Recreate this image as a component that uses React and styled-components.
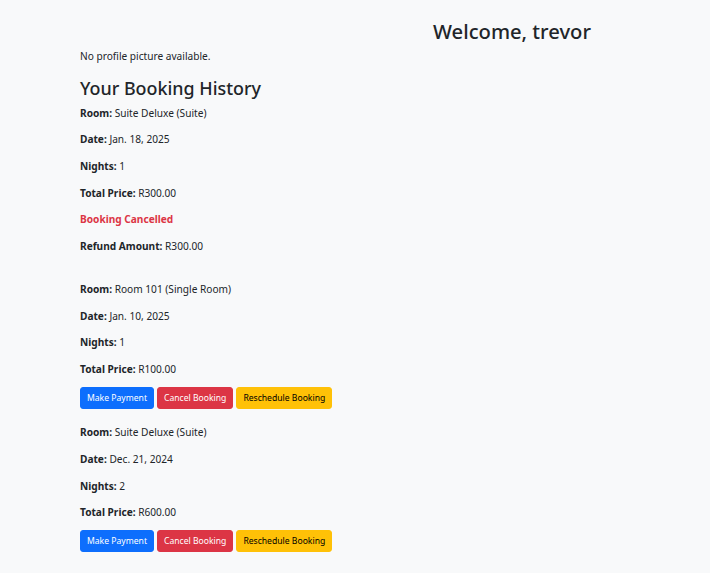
import React from 'react';
import styled, { createGlobalStyle } from 'styled-components';

const GlobalStyle = createGlobalStyle`
  html, body {
    margin: 0;
    padding: 0;
    background: #f8f9fa;
  }
  body {
    font-family: "Noto Sans", "Liberation Sans", sans-serif;
    font-size: 10.15px;
    line-height: 15.9px;
    color: #212529;
  }
`;

const Page = styled.div`
  min-height: 573px;
  padding: 19px 0 0 80px;
  box-sizing: border-box;
`;

const Welcome = styled.h1`
  margin: 0 0 5px;
  padding-left: 234px;
  text-align: center;
  font-size: 20.2px;
  font-weight: 500;
  line-height: 25px;
`;

const Text = styled.p`
  margin: 0 0 10.75px;
  color: ${({ $tone }) => ($tone === 'danger' ? '#dc3545' : '#212529')};
  font-weight: ${({ $tone }) => ($tone === 'danger' ? 700 : 400)};
`;

const Heading = styled.h2`
  margin: 0 0 6px;
  font-size: 17.9px;
  font-weight: 500;
  line-height: 24px;
`;

const Booking = styled.div`
  padding-bottom: 16.5px;
`;

const Actions = styled.div`
  display: flex;
  gap: 3px;
  margin-top: -2px;
`;

const colors = {
  primary: { bg: '#0d6efd', fg: '#fff' },
  danger: { bg: '#dc3545', fg: '#fff' },
  warning: { bg: '#ffc107', fg: '#000' },
};

const Button = styled.button`
  font-family: inherit;
  font-size: 8.6px;
  line-height: 14px;
  padding: 3px 6px;
  border: 1px solid ${({ $variant }) => colors[$variant].bg};
  border-radius: 3px;
  background: ${({ $variant }) => colors[$variant].bg};
  color: ${({ $variant }) => colors[$variant].fg};
  cursor: pointer;
`;

const bookings = [
  {
    room: 'Suite Deluxe (Suite)',
    date: 'Jan. 18, 2025',
    nights: 1,
    price: 'R300.00',
    cancelled: true,
    refund: 'R300.00',
  },
  { room: 'Room 101 (Single Room)', date: 'Jan. 10, 2025', nights: 1, price: 'R100.00' },
  { room: 'Suite Deluxe (Suite)', date: 'Dec. 21, 2024', nights: 2, price: 'R600.00' },
];

const Field = ({ label, children }) => (
  <Text>
    <strong>{label}:</strong> {children}
  </Text>
);

export default function App() {
  return (
    <>
      <GlobalStyle />
      <Page>
        <Welcome>Welcome, trevor</Welcome>
        <Text>No profile picture available.</Text>
        <Heading>Your Booking History</Heading>
        {bookings.map((b, i) => (
          <Booking key={i}>
            <Field label="Room">{b.room}</Field>
            <Field label="Date">{b.date}</Field>
            <Field label="Nights">{b.nights}</Field>
            <Field label="Total Price">{b.price}</Field>
            {b.cancelled ? (
              <>
                <Text $tone="danger">Booking Cancelled</Text>
                <Field label="Refund Amount">{b.refund}</Field>
              </>
            ) : (
              <Actions>
                <Button $variant="primary">Make Payment</Button>
                <Button $variant="danger">Cancel Booking</Button>
                <Button $variant="warning">Reschedule Booking</Button>
              </Actions>
            )}
          </Booking>
        ))}
      </Page>
    </>
  );
}
